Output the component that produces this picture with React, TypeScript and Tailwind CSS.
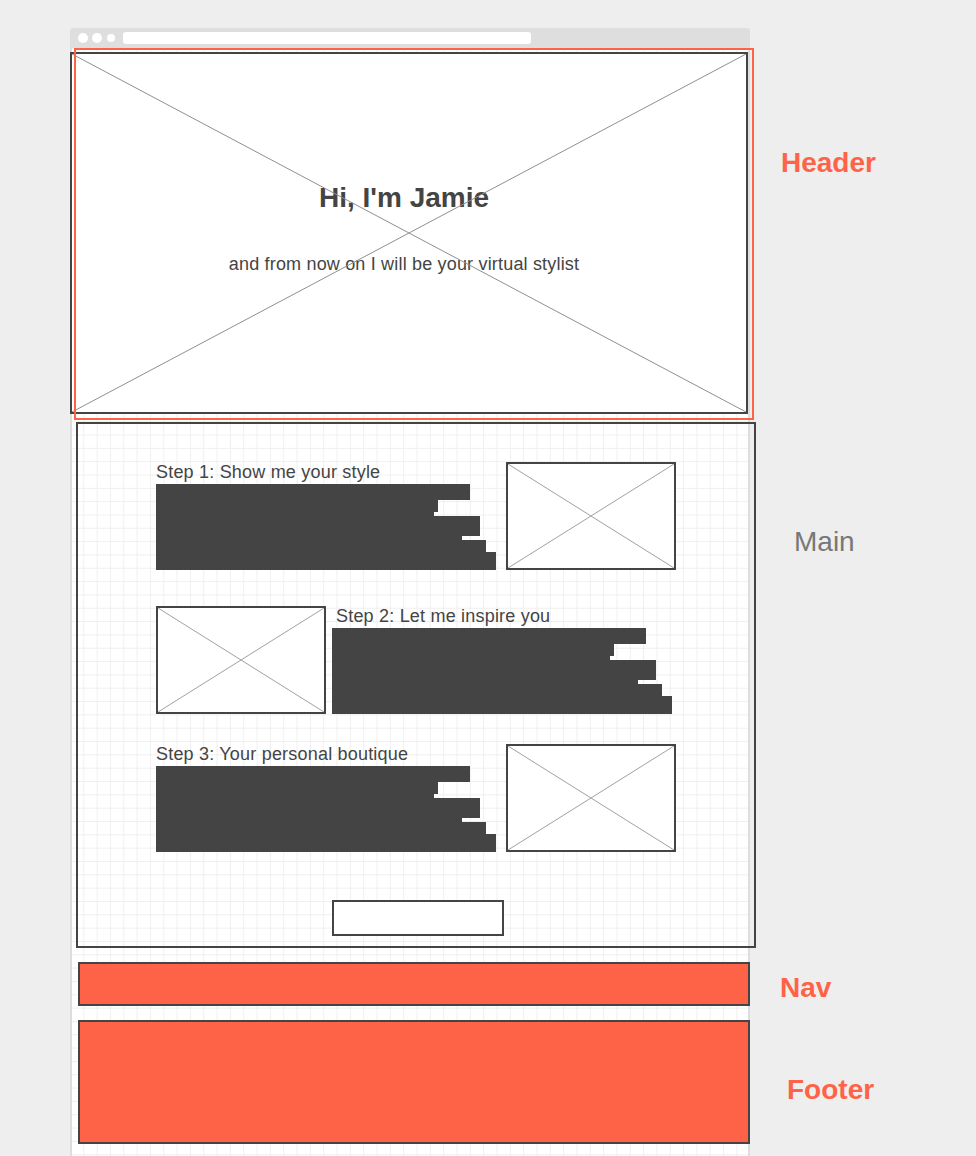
import React from 'react';

const BARS: { w: number; h: number }[] = [
  { w: 314, h: 16 },
  { w: 282, h: 12 },
  { w: 278, h: 4 },
  { w: 324, h: 20 },
  { w: 306, h: 4 },
  { w: 330, h: 12 },
  { w: 340, h: 18 },
];

const Cross: React.FC<{ stroke?: string }> = ({ stroke = '#9a9a9a' }) => (
  <svg className="absolute inset-0 w-full h-full pointer-events-none" viewBox="0 0 100 100" preserveAspectRatio="none">
    <line x1="0" y1="0" x2="100" y2="100" stroke={stroke} strokeWidth="1" vectorEffect="non-scaling-stroke" />
    <line x1="100" y1="0" x2="0" y2="100" stroke={stroke} strokeWidth="1" vectorEffect="non-scaling-stroke" />
  </svg>
);

const ImageBox: React.FC = () => (
  <div className="relative w-[170px] h-[108px] shrink-0 bg-white border-2 border-[#444444]">
    <Cross stroke="#a0a0a0" />
  </div>
);

const TextBlock: React.FC<{ title: string; indent?: boolean }> = ({ title, indent }) => (
  <div className="w-[340px] shrink-0 flex flex-col">
    <div className={`h-[22px] text-[18px] leading-[21px] tracking-[0.2px] text-[#444444] whitespace-nowrap ${indent ? 'pl-[4px]' : ''}`}>
      {title}
    </div>
    {BARS.map((b, i) => (
      <div key={i} className="bg-[#444444]" style={{ width: b.w, height: b.h }} />
    ))}
  </div>
);

export default function App() {
  return (
    <div className="h-[1156px] overflow-hidden bg-[#eeeeee] pt-[28px] pl-[70px] font-['Liberation_Sans',Arial,sans-serif]">
      <div className="w-[680px] flex flex-col">
        {/* Browser bar */}
        <div className="h-[20px] bg-[#dedede] rounded-t-[3px] flex items-center pl-[8px]">
          <div className="w-[10px] h-[10px] rounded-full bg-white" />
          <div className="w-[10px] h-[10px] rounded-full bg-white ml-[4px]" />
          <div className="w-[8px] h-[8px] rounded-full bg-white ml-[5px]" />
          <div className="w-[408px] h-[12px] rounded-[3px] bg-white ml-[8px]" />
        </div>

        {/* Page body */}
        <div className="h-[1108px] bg-white bg-[linear-gradient(to_right,#efefef_1px,transparent_1px),linear-gradient(to_bottom,#efefef_1px,transparent_1px)] bg-[size:13.33px_13.33px] shadow-[inset_2px_0_0_#dddddd,inset_-2px_0_0_#dddddd] flex flex-col pt-[4px]">
          {/* Header */}
          <div className="relative w-[678px] h-[362px] bg-white border-2 border-[#444444] flex flex-col items-center justify-center pb-[9px] pr-[10px]">
            <h1 className="text-[28px] leading-[32px] font-bold text-[#444444]">Hi, I'm Jamie</h1>
            <p className="mt-[39px] text-[18px] leading-[22px] tracking-[0.18px] text-[#444444]">and from now on I will be your virtual stylist</p>
            <Cross stroke="#8f8f8f" />
            <div className="absolute left-[2px] top-[-6px] w-[680px] h-[372px] border-2 border-[#ff6347] pointer-events-none" />
            <span className="absolute left-[709px] top-[93px] text-[28px] leading-[32px] font-bold text-[#ff6347] whitespace-nowrap">Header</span>
          </div>

          {/* Main */}
          <div className="relative mt-[8px] ml-[6px] w-[680px] h-[526px] border-2 border-[#444444] pt-[38px] pl-[78px] flex flex-col">
            <div className="flex gap-[10px]">
              <TextBlock title="Step 1: Show me your style" />
              <ImageBox />
            </div>
            <div className="flex gap-[6px] mt-[36px]">
              <ImageBox />
              <TextBlock title="Step 2: Let me inspire you" indent />
            </div>
            <div className="flex gap-[10px] mt-[30px]">
              <TextBlock title="Step 3: Your personal boutique" />
              <ImageBox />
            </div>
            <div className="mt-[48px] ml-[176px] w-[172px] h-[36px] bg-white border-2 border-[#444444]" />
            <span className="absolute left-[716px] top-[102px] text-[28px] leading-[32px] text-[#777777] whitespace-nowrap">Main</span>
          </div>

          {/* Nav */}
          <div className="relative mt-[14px] ml-[8px] w-[672px] h-[44px] bg-[#ff6347] border-2 border-[#444444]">
            <span className="absolute left-[700px] top-[8px] text-[28px] leading-[32px] font-bold text-[#ff6347] whitespace-nowrap">Nav</span>
          </div>

          {/* Footer */}
          <div className="relative mt-[14px] ml-[8px] w-[672px] h-[124px] bg-[#ff6347] border-2 border-[#444444]">
            <span className="absolute left-[707px] top-[52px] text-[28px] leading-[32px] font-bold text-[#ff6347] whitespace-nowrap">Footer</span>
          </div>
        </div>
      </div>
    </div>
  );
}
